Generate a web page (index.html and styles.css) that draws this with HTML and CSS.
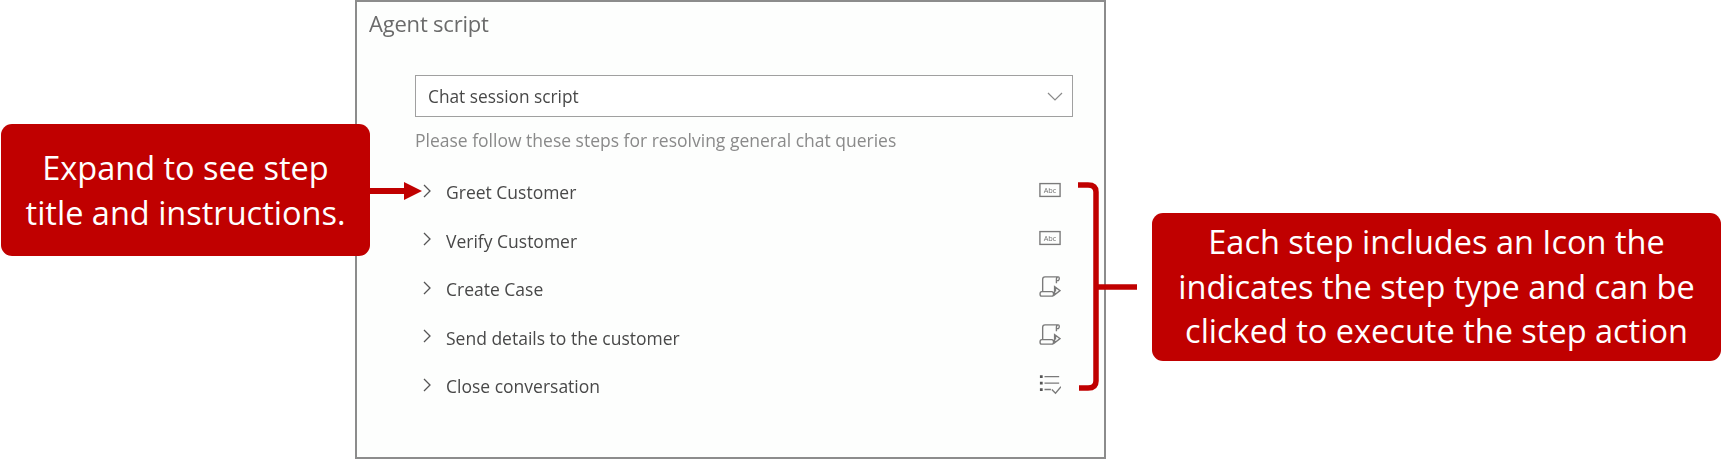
FILE: index.html
```html
<!DOCTYPE html>
<html lang="en">
<head>
<meta charset="utf-8">
<title>Agent script</title>
<link rel="stylesheet" href="styles.css">
</head>
<body>
<main class="stage">
  <section class="panel">
    <h1 class="panel-title">Agent script</h1>
    <div class="panel-body">
      <div class="select">
        <span>Chat session script</span>
        <svg class="select-caret" viewBox="0 0 16 9" aria-hidden="true"><path d="M1 1l7 7 7-7"/></svg>
      </div>
      <p class="hint">Please follow these steps for resolving general chat queries</p>
      <ul class="steps">
        <li class="step">
          <svg class="chevron" viewBox="0 0 8 14" aria-hidden="true"><path d="M1 1l6 6-6 6"/></svg>
          <span class="step-name">Greet Customer</span>
          <svg class="step-icon" viewBox="0 0 24 24" aria-hidden="true"><rect class="ln" x="1" y="5" width="22" height="14"/><text class="abc" x="12" y="15">Abc</text></svg>
        </li>
        <li class="step">
          <svg class="chevron" viewBox="0 0 8 14" aria-hidden="true"><path d="M1 1l6 6-6 6"/></svg>
          <span class="step-name">Verify Customer</span>
          <svg class="step-icon" viewBox="0 0 24 24" aria-hidden="true"><rect class="ln" x="1" y="5" width="22" height="14"/><text class="abc" x="12" y="15">Abc</text></svg>
        </li>
        <li class="step">
          <svg class="chevron" viewBox="0 0 8 14" aria-hidden="true"><path d="M1 1l6 6-6 6"/></svg>
          <span class="step-name">Create Case</span>
          <svg class="step-icon" viewBox="0 0 24 24" aria-hidden="true"><path class="ln" d="M4 17V3.500C4 2 5 1 6.500 1H21M21 1c-1.500 0-2 1-2 2.500V8M21 1c1.500 0 1.500 3 0 4h-2M4 17H3c-2.500 0-2.500 5 0 5h11c2.500 0 2.500-5 0-5H4M18 12v5M17 11.500v9l6-4.500z"/></svg>
        </li>
        <li class="step">
          <svg class="chevron" viewBox="0 0 8 14" aria-hidden="true"><path d="M1 1l6 6-6 6"/></svg>
          <span class="step-name">Send details to the customer</span>
          <svg class="step-icon" viewBox="0 0 24 24" aria-hidden="true"><path class="ln" d="M4 17V3.500C4 2 5 1 6.500 1H21M21 1c-1.500 0-2 1-2 2.500V8M21 1c1.500 0 1.500 3 0 4h-2M4 17H3c-2.500 0-2.500 5 0 5h11c2.500 0 2.500-5 0-5H4M18 12v5M17 11.500v9l6-4.500z"/></svg>
        </li>
        <li class="step">
          <svg class="chevron" viewBox="0 0 8 14" aria-hidden="true"><path d="M1 1l6 6-6 6"/></svg>
          <span class="step-name">Close conversation</span>
          <svg class="step-icon" viewBox="0 0 24 24" aria-hidden="true"><path class="ln" d="M6 4h16M6 11h16M6 18h7M14 18l4 4 6-7"/><path class="dots" d="M1 2.500h3v3H1zM1 9.500h3v3H1zM1 16.500h3v3H1z"/></svg>
        </li>
      </ul>
    </div>
  </section>

  <aside class="callout callout-left">Expand to see step<br>title and instructions.</aside>
  <svg class="arrow" viewBox="0 0 52 20" aria-hidden="true"><path d="M0 7h34V1l18 9-18 9v-6H0z"/></svg>

  <svg class="bracket" viewBox="0 0 60 212" aria-hidden="true"><path d="M1 4h10q8 0 8 7v189q0 7-8 7H2M19 106h41"/></svg>
  <aside class="callout callout-right">Each step includes an Icon the<br>indicates the step type and can be<br>clicked to execute the step action</aside>
</main>
</body>
</html>
```

FILE: styles.css
```css
* { box-sizing: border-box; }
html, body { margin: 0; padding: 0; background: #fff; }
body { font-family: "Open Sans", "Noto Sans", sans-serif; width: 1728px; height: 465px; overflow: hidden; }

.stage { position: relative; width: 1728px; height: 465px; padding: 0 0 0 355px; }

.panel {
  width: 751px;
  height: 459px;
  border: 2px solid #8c8c8c;
  background: #fdfefd;
  padding: 8px 31px 0 12px;
  color: #4a4a4a;
  filter: blur(.45px);
}
.panel-title { margin: 0; font-size: 22px; line-height: 26px; font-weight: 400; color: #6b6b6b; letter-spacing: -.2px; }

.panel-body { padding: 39px 0 0 46px; }

.select {
  display: flex;
  align-items: center;
  justify-content: space-between;
  height: 42px;
  padding: 0 9px 0 12px;
  border: 1.500px solid #a0a0a0;
  background: #fff;
  font-size: 17.300px;
  color: #484848;
}
.select-caret { width: 16px; height: 9px; }
.select-caret path { fill: none; stroke: #8a8a8a; stroke-width: 1.2; }

.hint { margin: 12px 0 0; font-size: 17.500px; line-height: 22px; color: #8a8a8a; }

.steps { list-style: none; margin: 17px 0 0; padding: 0; }
.step { display: flex; align-items: center; height: 48.500px; color: #484848; font-size: 17.500px; font-weight: 500; }
.chevron { width: 8px; height: 14px; margin: -3px 0 0 8px; flex: none; }
.chevron path { fill: none; stroke: #555; stroke-width: 1.300; }
.step-name { margin-left: 15px; flex: 1; }
.step-icon { width: 22px; height: 22px; margin-right: 12px; flex: none; margin-top: -5px; }
.ln { fill: none; stroke: #7a7a7a; stroke-width: 1.500; }
.dots { fill: #555; }
.abc { font-size: 8px; text-anchor: middle; fill: #707070; }

.callout {
  position: absolute;
  display: flex;
  align-items: center;
  justify-content: center;
  text-align: center;
  background: #c00000;
  color: #fff;
  border-radius: 11px;
  font-size: 32.500px;
  line-height: 44.500px;
}
.callout-left { left: 1px; top: 124px; width: 369px; height: 132px; padding-top: 1px; }
.callout-right { left: 1152px; top: 213px; width: 569px; height: 148px; }

.arrow { position: absolute; left: 370px; top: 181px; width: 52px; height: 20px; }
.arrow path { fill: #c00000; }

.bracket { position: absolute; left: 1077px; top: 181px; width: 60px; height: 212px; }
.bracket path { fill: none; stroke: #c00000; stroke-width: 5.500; }
```
